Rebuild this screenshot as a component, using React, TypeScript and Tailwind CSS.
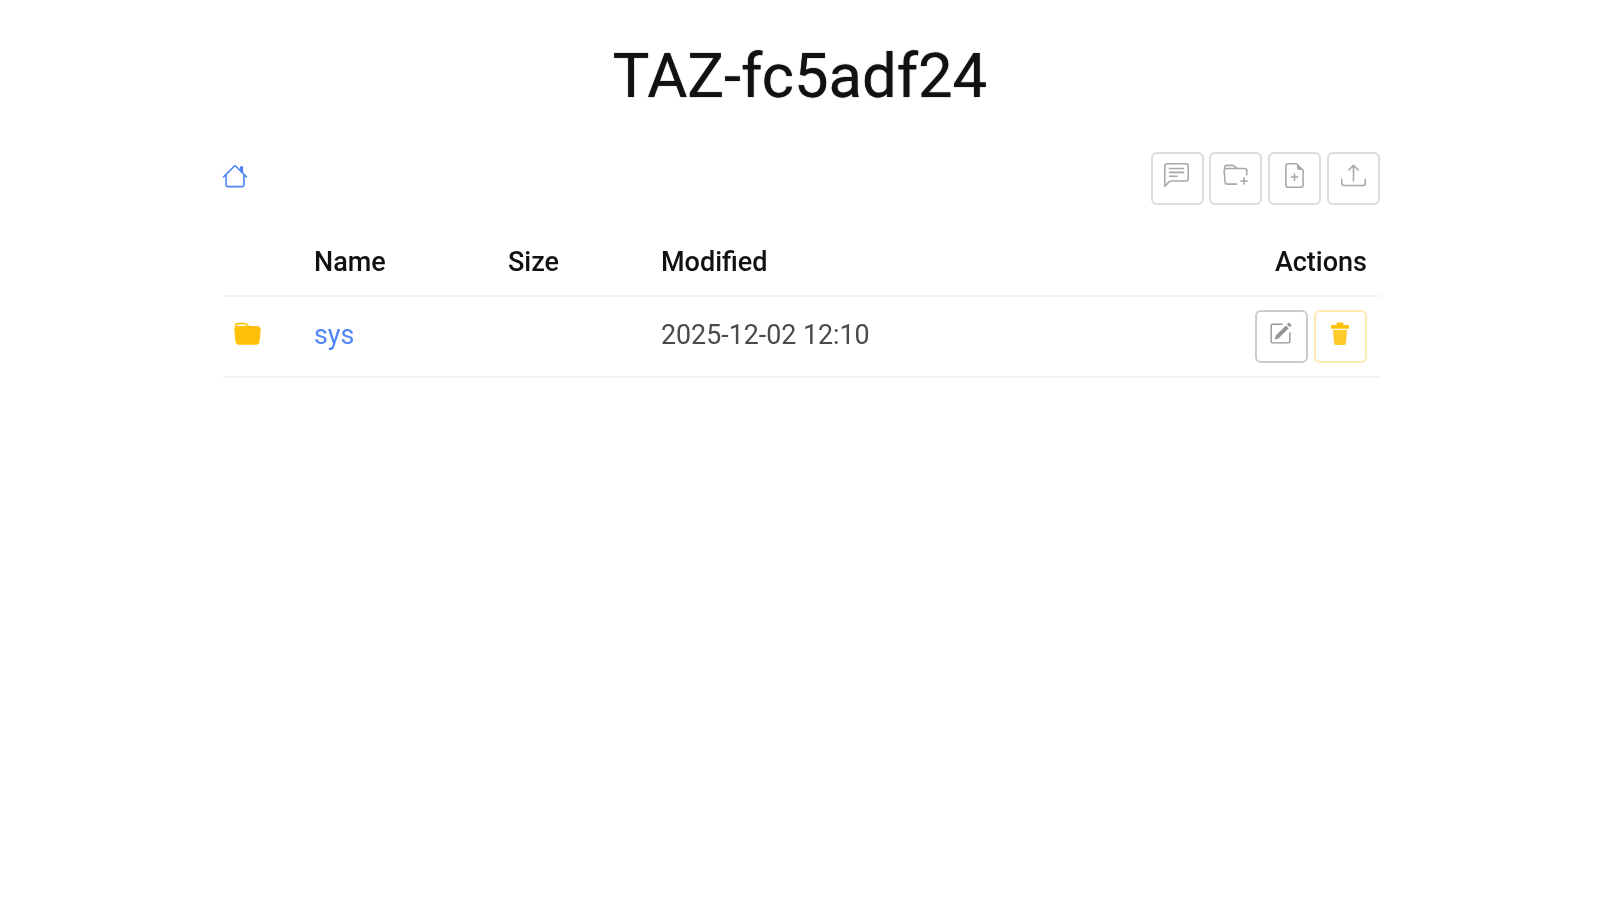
import { BsHouse, BsChatLeftText, BsFolderPlus, BsFileEarmarkPlus, BsUpload, BsFolderFill, BsPencilSquare } from "react-icons/bs";

const toolbar = [BsChatLeftText, BsFolderPlus, BsFileEarmarkPlus, BsUpload];

function Trash() {
  return (
    <svg viewBox="0 0 18 24" className="size-[24px]" fill="currentColor">
      <path d="M6.5 0.5h5a1 1 0 0 1 1 1V3H17a1 1 0 0 1 1 1v1.8a1 1 0 0 1-1 1H1a1 1 0 0 1-1-1V4a1 1 0 0 1 1-1h4.5V1.5a1 1 0 0 1 1-1z" />
      <path d="M2 8h14l-1 13.2a2 2 0 0 1-2 1.8H5a2 2 0 0 1-2-1.8z" fillOpacity="0.85" />
    </svg>
  );
}

export default function App() {
  return (
    <div className="min-h-[900px] bg-white font-['Roboto',sans-serif] text-[#111] blur-[0.7px]">
      <h1 className="pt-[41px] text-center text-[61.5px] font-normal leading-[70px] text-[#111] [text-shadow:0_0_1px_#111]">TAZ-fc5adf24</h1>
      <div className="ml-[223px] mt-[41px] w-[1157px]">
        <div className="flex h-[53px] items-start justify-between">
          <BsHouse className="-ml-[1px] mt-[11px] size-[26px] text-[#4f86f7]" />
          <div className="flex gap-[5.8px]">
            {toolbar.map((Icon, i) => (
              <button key={i} className="flex h-[53px] w-[53px] items-start justify-center rounded-[6px] border-2 border-[#dcdcdc] pr-[1px] pt-[9px] text-[#a8a8a8]">
                <Icon className="size-[25px]" />
              </button>
            ))}
          </div>
        </div>
        <div className="mt-[18px] flex h-[74px] items-center border-b-2 border-[#f4f4f4] pt-[7px] text-[27px] font-medium text-[#111]">
          <div className="w-[91px]" />
          <div className="w-[194px]">Name</div>
          <div className="w-[153px]">Size</div>
          <div className="flex-1">Modified</div>
          <div className="pr-[13px]">Actions</div>
        </div>
        <div className="flex h-[81px] items-center border-b-2 border-[#f2f2f2] text-[26.8px]">
          <div className="w-[91px] pl-[11px]">
            <BsFolderFill className="-mt-[5px] size-[27px] text-[#ffc107]" />
          </div>
          <div className="w-[194px] -translate-y-[1px] text-[#4f86f7]">sys</div>
          <div className="w-[153px]" />
          <div className="flex-1 -translate-y-[1px] text-[#4a4a4a]">2025-12-02 12:10</div>
          <div className="flex gap-[6px] pr-[13px]">
            <button className="flex h-[53px] w-[53px] items-start justify-center rounded-[6px] border-2 border-[#cccccc] pr-[2px] pt-[10px] text-[#969696]">
              <BsPencilSquare className="size-[23px]" />
            </button>
            <button className="flex h-[53px] w-[53px] items-start justify-center rounded-[6px] border-2 border-[#ffeab0] pr-[1px] pt-[10px] text-[#ffc107]">
              <Trash />
            </button>
          </div>
        </div>
      </div>
    </div>
  );
}
